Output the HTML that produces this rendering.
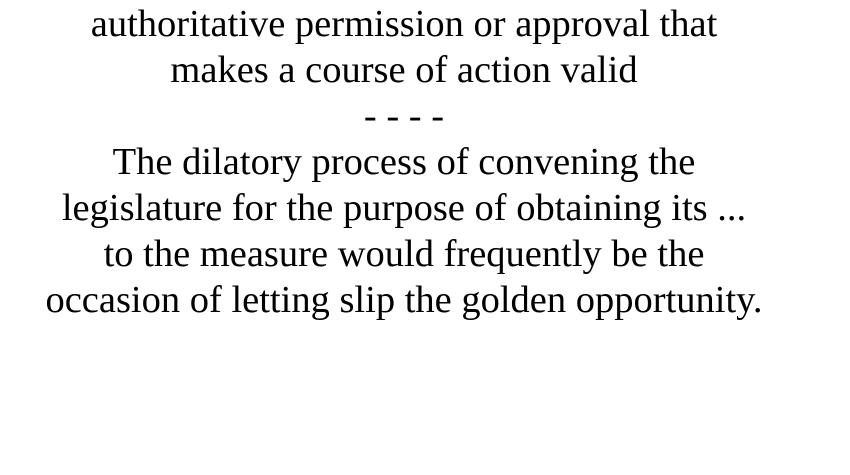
<!DOCTYPE html>
<html><head><style>
html,body{margin:0;padding:0;background:#fff;}
body{width:850px;height:475px;overflow:hidden;}
.t{width:808px;text-align:center;font-family:"Liberation Serif",serif;font-size:38.5px;line-height:46px;color:#000;padding-top:1px;}
</style></head><body>
<div class="t">authoritative permission or approval that<br>makes a course of action valid<br>- - - -<br>The dilatory process of convening the<br>legislature for the purpose of obtaining its ...<br>to the measure would frequently be the<br>occasion of letting slip the golden opportunity.</div>
</body></html>
